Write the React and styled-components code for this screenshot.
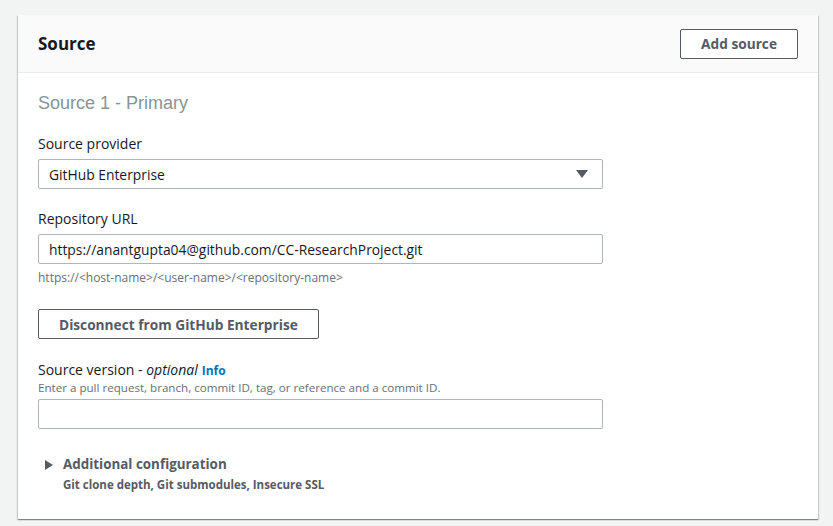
import React from 'react'
import styled, { createGlobalStyle } from 'styled-components'

const Global = createGlobalStyle`
  html, body { margin: 0; padding: 0; background: #f2f3f3; }
  body { font-family: "Open Sans", "Noto Sans", sans-serif; color: #16191f; }
`

const Page = styled.div`
  padding: 15px 15px 7px 18px;
  width: 833px;
  box-sizing: border-box;
`

const Card = styled.section`
  width: 800px;
  background: #fff;
  box-shadow: 0 1px 1px 0 rgba(0, 28, 36, 0.3), 1px 1px 1px 0 rgba(0, 28, 36, 0.15), -1px 1px 1px 0 rgba(0, 28, 36, 0.15);
`

const Header = styled.header`
  display: flex;
  align-items: center;
  justify-content: space-between;
  height: 58px;
  padding: 0 20px;
  background: #fafafa;
  border-bottom: 1px solid #eaeded;
  box-sizing: border-box;
`

const Title = styled.h2`
  margin: 0;
  font-size: 17px;
  font-weight: 700;
  color: #16191f;
`

const Button = styled.button`
  height: 30px;
  padding: 0 ${p => p.$pad || 20}px;
  background: #fff;
  border: 1px solid #545b64;
  border-radius: 2px;
  font-family: inherit;
  font-size: 13.7px;
  font-weight: 700;
  color: #545b64;
  cursor: pointer;
`

const Body = styled.div`
  padding: 18px 20px 26px;
`

const SubTitle = styled.h3`
  margin: 0 0 19px;
  font-family: "Liberation Sans", Arial, sans-serif;
  font-size: 18px;
  font-weight: 400;
  color: #879596;
  line-height: 24px;
`

const Field = styled.div`
  display: flex;
  flex-direction: column;
  margin-bottom: ${p => p.$gap || 0}px;
`

const Label = styled.label`
  font-size: 14px;
  line-height: 20px;
  margin-bottom: 5px;
  color: #16191f;
  em { font-style: italic; }
`

const Info = styled.a`
  font-size: 12px;
  font-weight: 700;
  color: #0073bb;
  margin-left: 4px;
`

const Description = styled.div`
  font-size: ${p => p.$top ? 11.6 : 12}px;
  line-height: 16px;
  color: #687078;
  margin: ${p => p.$top ? '-6px 0 3px' : '6px 0 0'};
`

const InputBox = styled.div`
  width: 565px;
  height: 30px;
  box-sizing: border-box;
  display: flex;
  align-items: center;
  justify-content: space-between;
  padding: 0 14px 0 10px;
  border: 1px solid #aab7b8;
  border-radius: 2px;
  font-size: 13.85px;
  color: #16191f;
`

const Caret = styled.span`
  width: 0;
  height: 0;
  border-left: 6px solid transparent;
  border-right: 6px solid transparent;
  border-top: 8px solid #545b64;
`

const Expander = styled.div`
  display: flex;
  gap: 10px;
  padding-left: 7px;
  margin-top: 25px;
`

const Arrow = styled.span`
  width: 0;
  height: 0;
  margin-top: 6px;
  border-top: 5px solid transparent;
  border-bottom: 5px solid transparent;
  border-left: 8px solid #545b64;
`

const ExpTitle = styled.div`
  font-size: 13.4px;
  font-weight: 700;
  color: #545b64;
  line-height: 20px;
`

const ExpDesc = styled.div`
  font-size: 11.5px;
  font-weight: 700;
  color: #545b64;
  line-height: 16px;
  margin-top: 3px;
`

export default function App() {
  return (
    <Page>
      <Global />
      <Card>
        <Header>
          <Title>Source</Title>
          <Button $pad={20}>Add source</Button>
        </Header>
        <Body>
          <SubTitle>Source 1 - Primary</SubTitle>
          <Field $gap={20}>
            <Label>Source provider</Label>
            <InputBox>
              GitHub Enterprise
              <Caret />
            </InputBox>
          </Field>
          <Field $gap={23}>
            <Label>Repository URL</Label>
            <InputBox>https://anantgupta04@github.com/CC-ResearchProject.git</InputBox>
            <Description>https://&lt;host-name&gt;/&lt;user-name&gt;/&lt;repository-name&gt;</Description>
          </Field>
          <Field $gap={21}>
            <div><Button $pad={20}>Disconnect from GitHub Enterprise</Button></div>
          </Field>
          <Field>
            <Label>
              Source version - <em>optional</em>
              <Info>Info</Info>
            </Label>
            <Description $top>Enter a pull request, branch, commit ID, tag, or reference and a commit ID.</Description>
            <InputBox />
          </Field>
          <Expander>
            <Arrow />
            <div>
              <ExpTitle>Additional configuration</ExpTitle>
              <ExpDesc>Git clone depth, Git submodules, Insecure SSL</ExpDesc>
            </div>
          </Expander>
        </Body>
      </Card>
    </Page>
  )
}
